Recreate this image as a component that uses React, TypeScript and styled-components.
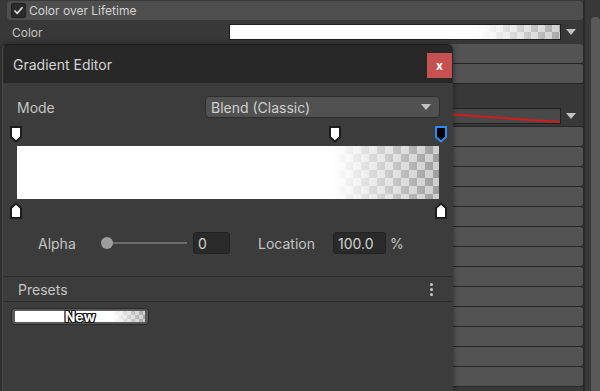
import React from 'react';
import styled, { createGlobalStyle } from 'styled-components';

const GlobalStyle = createGlobalStyle`
  html, body {
    margin: 0;
    padding: 0;
    background: #383838;
  }
  body {
    font-family: Inter, "Noto Sans", sans-serif;
  }
`;

// checkerboard behind transparent parts of a gradient
const checker = (size: number, light: string, dark: string) =>
  `repeating-conic-gradient(${dark} 0% 25%, ${light} 0% 50%) 0 0 / ${size * 2}px ${size * 2}px`;

const whiteFade = 'linear-gradient(to right, #fff 0%, #fff 75%, rgba(255,255,255,0) 100%)';

const Inspector = styled.div`
  position: relative;
  display: flex;
  width: 600px;
  height: 391px;
  overflow: hidden;
  background: #383838;
`;

const Column = styled.div`
  flex: 0 0 585px;
  display: flex;
  flex-direction: column;
  padding: 1px 0 0 7px;
  box-sizing: border-box;
  border-right: 2px solid #2a2a2a;
`;

const Gutter = styled.div`
  flex: 1;
  display: flex;
  justify-content: flex-end;
  padding-top: 17px;
`;

const ScrollThumb = styled.div`
  width: 9px;
  background: #595959;
  border-radius: 4px 4px 0 0;
`;

const ModuleHeader = styled.div`
  display: flex;
  align-items: center;
  gap: 3px;
  height: 19px;
  padding-left: 4px;
  background: #4e4e4e;
  border-radius: 3px;
  color: #d2d2d2;
  font-size: 12px;
`;

const CheckBox = styled.div`
  width: 15px;
  height: 15px;
  box-sizing: border-box;
  background: #2b2b2b;
  border: 1px solid #1f1f1f;
  border-radius: 2px;
  display: flex;
  align-items: center;
  justify-content: center;
`;

const PropLine = styled.div`
  display: flex;
  align-items: center;
  height: 24px;
  padding-left: 5px;
  color: #c4c4c4;
  font-size: 12px;
`;

const PropLabel = styled.div`
  flex: 0 0 217px;
`;

const GradientField = styled.div`
  flex: 0 0 332px;
  height: 16px;
  box-sizing: border-box;
  border: 1px solid #1e1e1e;
  background: ${whiteFade}, ${checker(7, '#d0d0d0', '#a8a8a8')};
`;

const DropArrow = styled.div`
  flex: 1;
  display: flex;
  justify-content: center;
  padding-right: 3px;
  &::after {
    content: '';
    border-left: 5px solid transparent;
    border-right: 5px solid transparent;
    border-top: 6px solid #c2c2c2;
  }
`;

const RowGroup = styled.div`
  display: flex;
  flex-direction: column;
  gap: 1px;
  background: #262626;
  padding: ${({ $edges }: { $edges?: boolean }) => ($edges ? '1px 0' : '0 0 1px')};
`;

const PropRow = styled.div`
  height: 19px;
  background: #535353;
  border-radius: 0 2px 2px 0;
`;

const Spacer = styled.div`
  height: ${({ $h }: { $h: number }) => $h}px;
`;

const CurveLine = styled.div`
  display: flex;
  align-items: center;
  height: 21px;
  padding-left: 222px;
`;

const CurveField = styled.div`
  flex: 0 0 332px;
  height: 16px;
  box-sizing: border-box;
  border: 1px solid #222;
  background: #494949;
  svg {
    display: block;
  }
`;

/* ---------- gradient editor window ---------- */

const Dialog = styled.div`
  position: absolute;
  left: 2px;
  top: 44px;
  width: 451px;
  height: 360px;
  box-sizing: border-box;
  display: flex;
  flex-direction: column;
  background: #3c3c3c;
  border-left: 1px solid #4b4b4b;
  border-top: 1px solid #1d1d1d;
  border-radius: 6px 6px 0 0;
  box-shadow: 0 0 6px rgba(0, 0, 0, 0.45);
  overflow: hidden;
`;

const TitleBar = styled.div`
  display: flex;
  align-items: center;
  justify-content: space-between;
  height: 38px;
  padding: 0 1px 0 10px;
  background: #282828;
  color: #d4d4d4;
  font-size: 14px;
`;

const CloseButton = styled.div`
  width: 25px;
  height: 25px;
  margin-top: 2px;
  display: flex;
  align-items: center;
  justify-content: center;
  background: #c65151;
  color: #fff;
  font-size: 12px;
  font-weight: 700;
`;

const ModeRow = styled.div`
  display: flex;
  align-items: center;
  margin-top: 13px;
  padding: 0 13px 0 14px;
  color: #c4c4c4;
  font-size: 14px;
`;

const ModeLabel = styled.div`
  flex: 0 0 188px;
`;

const Dropdown = styled.div`
  flex: 1;
  height: 22px;
  box-sizing: border-box;
  display: flex;
  align-items: center;
  justify-content: space-between;
  padding: 0 8px 0 5px;
  background: #515151;
  border: 1px solid #2e2e2e;
  border-radius: 4px;
  color: #d0d0d0;
  &::after {
    content: '';
    border-left: 5px solid transparent;
    border-right: 5px solid transparent;
    border-top: 6px solid #c4c4c4;
  }
`;

const KeyStrip = styled.div`
  position: relative;
  height: ${({ $h }: { $h: number }) => $h}px;
  margin: 0 12px 0 13px;
`;

const KeyPin = styled.div<{ $at: number; $top: number }>`
  position: absolute;
  left: ${({ $at }) => $at}%;
  top: ${({ $top }) => $top}px;
  transform: translateX(-50%);
  svg {
    display: block;
  }
`;

const GradientBar = styled.div`
  height: 53px;
  margin: 0 14px;
  background: ${whiteFade}, ${checker(8, '#cdcdcd', '#9c9c9c')};
`;

const ValueRow = styled.div`
  display: flex;
  align-items: center;
  margin-top: 13px;
  padding-left: 35px;
  color: #c4c4c4;
  font-size: 14px;
`;

const ValueLabel = styled.div<{ $w: number; $gap?: number }>`
  flex: 0 0 ${({ $w }) => $w}px;
  margin-left: ${({ $gap }) => $gap ?? 0}px;
`;

const Slider = styled.div`
  position: relative;
  flex: 0 0 86px;
  height: 12px;
  display: flex;
  align-items: center;
  margin-right: 6px;
  &::before {
    content: '';
    flex: 1;
    height: 2px;
    margin-left: 6px;
    background: #6b6b6b;
  }
`;

const Knob = styled.div`
  position: absolute;
  left: 0;
  top: 0;
  width: 12px;
  height: 12px;
  border-radius: 50%;
  background: #9d9d9d;
`;

const NumberBox = styled.div<{ $w: number }>`
  flex: 0 0 ${({ $w }) => $w}px;
  height: 22px;
  box-sizing: border-box;
  display: flex;
  align-items: center;
  padding-left: 4px;
  background: #2a2a2a;
  border: 1px solid #222;
  border-radius: 3px;
  color: #d2d2d2;
`;

const Unit = styled.div`
  margin-left: 4px;
`;

const PresetsHeader = styled.div`
  display: flex;
  align-items: center;
  justify-content: space-between;
  height: 24px;
  margin-top: 22px;
  padding: 0 20px 0 15px;
  border-top: 1px solid #2d2d2d;
  border-bottom: 1px solid #2d2d2d;
  color: #c4c4c4;
  font-size: 14px;
`;

const Kebab = styled.div`
  display: flex;
  flex-direction: column;
  gap: 2px;
  span {
    width: 3px;
    height: 3px;
    border-radius: 50%;
    background: #c8c8c8;
  }
`;

const PresetSwatch = styled.div`
  width: 138px;
  height: 17px;
  box-sizing: border-box;
  margin: 6px 0 0 8px;
  padding: 2px 3px;
  background: #5a5a5a;
  border: 1px solid #2a2a2a;
  border-radius: 4px;
`;

const SwatchFill = styled.div`
  height: 100%;
  display: flex;
  align-items: center;
  justify-content: center;
  background: ${whiteFade}, ${checker(4, '#cfcfcf', '#a6a6a6')};
  color: #fff;
  font-size: 14px;
  font-weight: 700;
  text-shadow: -1px 0 #111, 1px 0 #111, 0 -1px #111, 0 1px #111, -1px -1px #111, 1px 1px #111,
    -1px 1px #111, 1px -1px #111;
`;

const Key = ({ up, selected }: { up?: boolean; selected?: boolean }) => (
  <svg width="12" height="17" viewBox="0 0 12 17">
    <path
      d={up ? 'M1 16H11V6L6 1.5L1 6Z' : 'M1 1H11V11L6 15.5L1 11Z'}
      fill={selected ? '#000' : '#fff'}
      stroke={selected ? '#2a8cf2' : '#1c1c1c'}
      strokeWidth="2"
    />
  </svg>
);

const App: React.FC = () => {
  const lowerRows = Array.from({ length: 13 });

  return (
    <>
      <GlobalStyle />
      <Inspector>
        <Column>
          <ModuleHeader>
            <CheckBox>
              <svg width="11" height="11" viewBox="0 0 11 11">
                <path d="M1.5 5.5L4.2 8.3L9.5 2.2" fill="none" stroke="#e6e6e6" strokeWidth="1.5" />
              </svg>
            </CheckBox>
            Color over Lifetime
          </ModuleHeader>
          <PropLine>
            <PropLabel>Color</PropLabel>
            <GradientField />
            <DropArrow />
          </PropLine>
          <RowGroup>
            <PropRow />
            <PropRow />
          </RowGroup>
          <Spacer $h={21} />
          <CurveLine>
            <CurveField>
              <svg width="330" height="14" viewBox="0 0 330 14">
                <path d="M0 0 L150 0.5 L330 13" stroke="#d41c1c" strokeWidth="2" fill="none" />
              </svg>
            </CurveField>
            <DropArrow />
          </CurveLine>
          <RowGroup $edges>
            {lowerRows.map((_, i) => (
              <PropRow key={i} />
            ))}
          </RowGroup>
        </Column>
        <Gutter>
          <ScrollThumb />
        </Gutter>

        <Dialog>
          <TitleBar>
            Gradient Editor
            <CloseButton>x</CloseButton>
          </TitleBar>
          <ModeRow>
            <ModeLabel>Mode</ModeLabel>
            <Dropdown>Blend (Classic)</Dropdown>
          </ModeRow>
          <Spacer $h={7} />
          <KeyStrip $h={21}>
            <KeyPin $at={0} $top={1}>
              <Key />
            </KeyPin>
            <KeyPin $at={75} $top={1}>
              <Key />
            </KeyPin>
            <KeyPin $at={100} $top={1}>
              <Key selected />
            </KeyPin>
          </KeyStrip>
          <GradientBar />
          <KeyStrip $h={20}>
            <KeyPin $at={0} $top={3}>
              <Key up />
            </KeyPin>
            <KeyPin $at={100} $top={3}>
              <Key up />
            </KeyPin>
          </KeyStrip>
          <ValueRow>
            <ValueLabel $w={63}>Alpha</ValueLabel>
            <Slider>
              <Knob />
            </Slider>
            <NumberBox $w={37}>0</NumberBox>
            <ValueLabel $w={75} $gap={28}>
              Location
            </ValueLabel>
            <NumberBox $w={53}>100.0</NumberBox>
            <Unit>%</Unit>
          </ValueRow>
          <PresetsHeader>
            Presets
            <Kebab>
              <span />
              <span />
              <span />
            </Kebab>
          </PresetsHeader>
          <PresetSwatch>
            <SwatchFill>New</SwatchFill>
          </PresetSwatch>
        </Dialog>
      </Inspector>
    </>
  );
};

export default App;
